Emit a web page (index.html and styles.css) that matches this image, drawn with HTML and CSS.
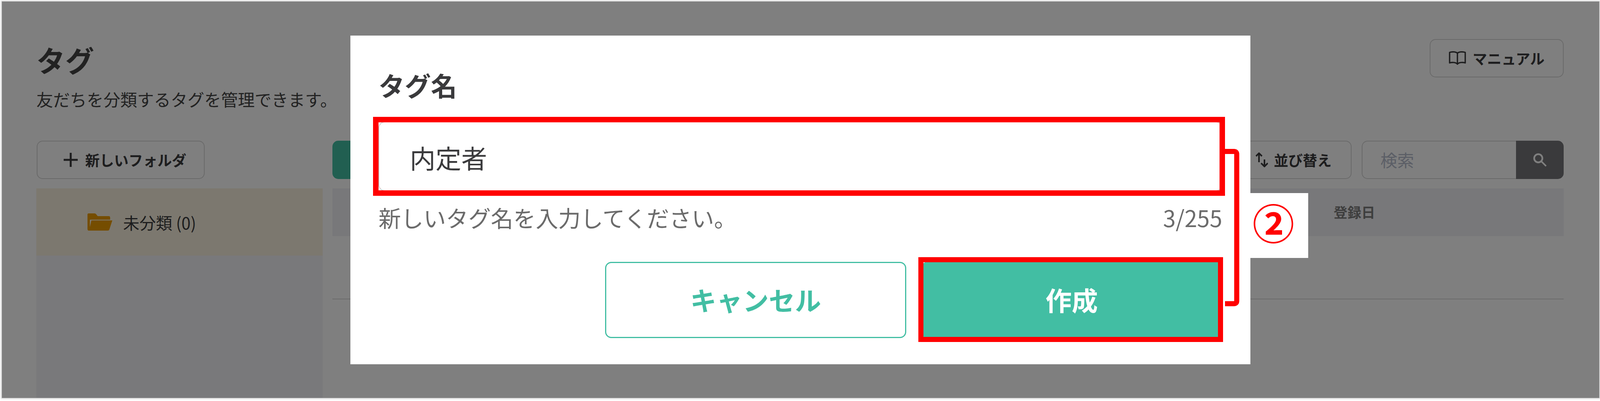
FILE: index.html
```html
<!DOCTYPE html>
<html lang="ja">
<head>
<meta charset="utf-8">
<title>タグ</title>
<link rel="stylesheet" href="styles.css">
</head>
<body>
<div class="frame">
  <main class="page">
    <header class="page-head">
      <div class="page-titles">
        <h1 class="page-title">タグ</h1>
        <p class="page-desc">友だちを分類するタグを管理できます。</p>
      </div>
      <button class="btn btn-manual" type="button">
        <svg class="icon-book" viewBox="0 0 44 36" fill="none" stroke="currentColor" stroke-width="3.4" stroke-linejoin="round" stroke-linecap="round"><path d="M22 5C18 1 8 1 2 3V30C8 28 18 28 22 33C26 28 36 28 42 30V3C36 1 26 1 22 5Z"/><path d="M22 5V33"/></svg>
        マニュアル
      </button>
    </header>
    <div class="workspace">
      <button class="btn btn-folder" type="button">
        <svg class="icon-plus" viewBox="0 0 36 36" fill="none" stroke="currentColor" stroke-width="5"><path d="M0 18H36M18 0V36"/></svg>
        新しいフォルダ
      </button>
      <div class="toolbar">
        <button class="btn-primary" type="button"></button>
        <div class="toolbar-right">
          <button class="btn btn-sort" type="button">
            <svg class="icon-sort" viewBox="0 0 32 38" fill="none" stroke="currentColor" stroke-width="4"><path d="M9 25V2M1.500 9.500L9 2L16.500 9.500"/><path d="M23 18V36M14.500 27.500L23 36L31.500 27.500"/></svg>
            並び替え
          </button>
          <div class="search">
            <span class="search-input">検索</span>
            <span class="search-btn"><svg class="icon-search" viewBox="0 0 34 34" fill="none" stroke="currentColor" stroke-width="4.4"><circle cx="13" cy="13" r="10.5"/><path d="M20.500 20.500L33 33" stroke-width="4"/></svg></span>
          </div>
        </div>
      </div>
      <aside class="folders">
        <div class="folder-row">
          <svg class="icon-folder" viewBox="0 0 64 44"><path class="folder-shape" d="M3 0H18C20 0 21 1 22 2L26 7H55C57 7 58 9 58 11V16H6V35L10 18H63.500L56 41C55.500 43 54 44 52 44H3C1 44 0 42 0 40V3C0 1 1 0 3 0Z"/></svg>
          <span>未分類 (0)</span>
        </div>
      </aside>
      <section class="table">
        <div class="table-head"><span class="col-date">登録日</span></div>
        <div class="table-row"></div>
      </section>
    </div>
  </main>
  <div class="scrim"></div>
  <div class="modal">
    <h2 class="modal-title">タグ名</h2>
    <div class="field">内定者</div>
    <div class="help"><span>新しいタグ名を入力してください。</span><span class="help-count">3/255</span></div>
    <div class="actions">
      <button class="action action-cancel" type="button">キャンセル</button>
      <button class="action action-create" type="button">作成</button>
    </div>
  </div>
  <div class="mark mark-input"></div>
  <div class="mark mark-create"></div>
  <svg class="bracket" viewBox="0 0 40 410" fill="none" stroke="#ff0000" stroke-width="13"><path d="M0 6.500H23Q30 6.500 30 13.500V389Q30 396 23 396H0"/></svg>
  <div class="step">②</div>
</div>
</body>
</html>
```

FILE: styles.css
```css
* { box-sizing: border-box; }
html, body { margin: 0; height: 1026px; overflow: hidden; background: #fff; }
body { font-family: "Noto Sans CJK JP", "Noto Sans", sans-serif; color: #3a3a3c; }
button { font-family: inherit; }

.frame {
  position: relative;
  width: 4089px;
  height: 1014px;
  margin: 4px 0 0 5px;
  box-shadow: 0 0 0 1px #c4c4c4, 0 0 4px 3px #e0e0e0;
  background: #fff;
  overflow: hidden;
}
.page { height: 100%; padding: 96px 91px 0 88px; display: flex; flex-direction: column; }
.page-head { display: flex; justify-content: space-between; align-items: flex-start; height: 260px; }
.page-title { margin: 0; font-size: 74px; line-height: 104px; font-weight: 700; color: #444; }
.page-desc { margin: 19px 0 0; font-size: 43px; line-height: 60px; color: #444; }

.btn {
  display: flex; align-items: center; justify-content: center;
  background: #fff; border: 2px solid #d4d4d4; border-radius: 15px;
  font-size: 37px; font-weight: 700; color: #3a3a3c; padding: 0;
}
.btn-manual { width: 343px; height: 98px; gap: 17px; }
.icon-book { width: 44px; height: 36px; }

.workspace { flex: 1; display: grid; grid-template-columns: 733px 1fr; grid-template-rows: 98px 1fr; gap: 24px 25px; }
.btn-folder { width: 430px; height: 98px; margin-left: 1px; gap: 19px; justify-content: flex-start; padding-left: 67px; }
.icon-plus { width: 36px; height: 36px; }

.toolbar { display: flex; justify-content: space-between; }
.btn-primary { width: 380px; border: 0; border-radius: 15px 0 0 15px; background: #42bea3; }
.toolbar-right { display: flex; gap: 26px; }
.btn-sort { width: 340px; gap: 15px; justify-content: flex-end; padding-right: 49px; }
.icon-sort { width: 32px; height: 38px; }

.search { display: flex; width: 517px; height: 98px; }
.search-input {
  flex: 1; display: flex; align-items: center; padding: 0 0 3px 46px;
  border: 2px solid #d4d4d4; border-right: 0; border-radius: 15px 0 0 15px;
  font-size: 43px; color: #b6bccc;
}
.search-btn { width: 122px; display: flex; align-items: center; justify-content: center; background: #757578; border-radius: 0 15px 15px 0; color: #fff; }
.icon-search { width: 34px; height: 34px; }

.folders { background: #f3f3f6; }
.folder-row { height: 172px; display: flex; align-items: center; gap: 27px; padding-left: 131px; background: #f9f1de; font-size: 42px; color: #3a3a3c; }
.icon-folder { width: 64px; height: 44px; }
.folder-shape { fill: #ea9a00; }

.table-head { height: 122px; display: flex; align-items: center; padding-bottom: 3px; background: #f1f1f4; }
.col-date { margin-left: 2563px; font-size: 35.500px; font-weight: 700; color: #7c7c7c; }
.table-row { height: 162px; border-bottom: 2px solid #d6d6d6; }

.scrim { position: absolute; inset: 0; background: rgba(0, 0, 0, .5); }

.modal {
  position: absolute; left: 892px; top: 87px; width: 2304px; height: 841px;
  padding: 80px 72px 0; background: #fff;
  display: flex; flex-direction: column;
}
.modal-title { margin: 0 0 48px; font-size: 67px; line-height: 92px; font-weight: 700; color: #3a3a3c; }
.field {
  height: 178px; display: flex; align-items: center; padding: 3px 0 0 78px;
  border: 2px solid #ccc; border-radius: 16px;
  font-size: 66px; color: #3a3a3c;
}
.help { margin-top: 28px; display: flex; justify-content: space-between; font-size: 57.500px; line-height: 78px; color: #6b6b6b; }
.help-count { font-size: 58px; }
.actions { margin-top: 75px; display: flex; justify-content: flex-end; gap: 38px; }
.action { width: 771px; height: 195px; padding: 0 0 5px; border-radius: 16px; font-size: 67px; font-weight: 700; }
.action-cancel { background: #fff; border: 3px solid #42bea3; color: #42bea3; }
.action-create { background: #42bea3; border: 0; color: #fff; }

.mark { position: absolute; border: 14px solid #ff0000; }
.mark-input { left: 950px; top: 295px; width: 2181px; height: 202px; }
.mark-create { left: 2346px; top: 654px; width: 780px; height: 217px; border-width: 13px; }
.bracket { position: absolute; left: 3131px; top: 377px; width: 40px; height: 410px; }
.step {
  position: absolute; left: 3196px; top: 490px; width: 148px; height: 166px;
  display: flex; align-items: center; justify-content: center; padding: 0 30px 22px 0;
  background: #fff; color: #ff0000; font-size: 107px; font-weight: 700; line-height: 1;
}
```
